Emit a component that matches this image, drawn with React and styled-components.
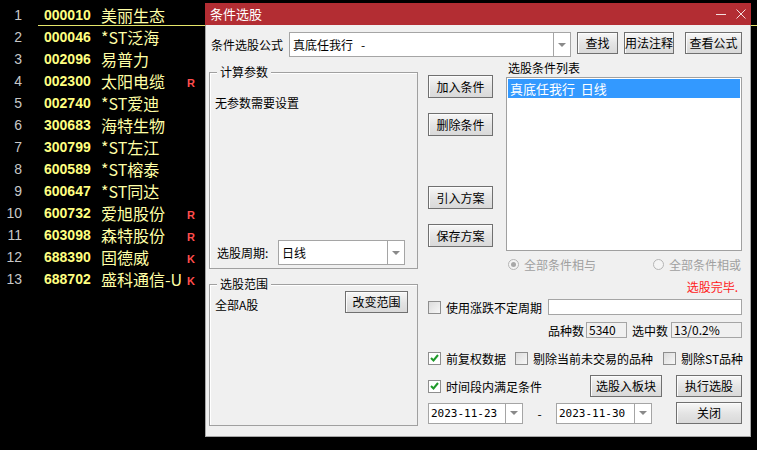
import React from "react";
import styled, { createGlobalStyle } from "styled-components";

const GlobalStyle = createGlobalStyle`
  html, body {
    margin: 0;
    padding: 0;
    background: #000;
  }
  body {
    width: 757px;
    height: 450px;
    overflow: hidden;
    font-family: "Noto Sans CJK SC", "Microsoft YaHei", sans-serif;
  }
  * {
    box-sizing: border-box;
  }
`;

const Screen = styled.div`
  position: relative;
  width: 757px;
  height: 450px;
  background: #000;
  overflow: hidden;
`;

/* ---------- stock list behind the dialog ---------- */

const StockList = styled.div`
  display: flex;
  flex-direction: column;
  padding-top: 4px;
`;

const StockRow = styled.div`
  display: flex;
  height: 22px;
`;

const RowNo = styled.div`
  width: 38px;
  padding-right: 16px;
  text-align: right;
  color: #c8c8c8;
  font: 14px/22px "Liberation Sans", Arial, sans-serif;
`;

const RowBody = styled.div`
  flex: 1;
  display: flex;
  align-items: center;
  border-bottom: 1px solid ${(p) => (p.$active ? "#e6e66a" : "transparent")};
`;

const Code = styled.span`
  width: 63px;
  padding-left: 6px;
  color: #ffff80;
  font: bold 14px "Liberation Sans", Arial, sans-serif;
`;

const Name = styled.span`
  width: 86px;
  color: #ffffa6;
  font: 16px "Noto Sans CJK SC", sans-serif;
  white-space: nowrap;
`;

const Flag = styled.span`
  margin-top: 4px;
  color: #ff4d4d;
  font: bold 11px "Liberation Sans", Arial, sans-serif;
`;

/* ---------- dialog window ---------- */

const Dialog = styled.div`
  position: absolute;
  left: 205px;
  top: 3px;
  width: 546px;
  height: 434px;
  display: flex;
  flex-direction: column;
  font-size: 12px;
  color: #000;
`;

const TitleBar = styled.div`
  height: 22px;
  display: flex;
  align-items: center;
  justify-content: space-between;
  background: #b32d33;
  padding: 0 5px 0 5px;
`;

const Title = styled.span`
  color: #fff;
  font-size: 13px;
  line-height: 22px;
`;

const WinControls = styled.div`
  display: flex;
  align-items: center;
  gap: 10px;
`;

const Body = styled.div`
  flex: 1;
  background: #f0f0f0;
  border: 1px solid #a6a6a6;
  border-top: none;
  padding: 7px 8px 0 3px;
`;

const FormulaRow = styled.div`
  display: flex;
  align-items: flex-start;
  height: 25px;
`;

const FormulaLabel = styled.span`
  width: 79px;
  margin-left: 2px;
  line-height: 25px;
`;

const Button = styled.button`
  width: ${(p) => p.$w}px;
  height: ${(p) => p.$h || 22}px;
  margin: ${(p) => p.$mt || 0}px 0 0 ${(p) => p.$ml || 0}px;
  padding: 0;
  flex-shrink: 0;
  border: 1px solid #707070;
  background: linear-gradient(#f7f7f7 0%, #ececec 30%, #e3e3e3 55%, #d9d9d9 100%);
  box-shadow: inset 1px 1px 0 #fcfcfc;
  font: 12px "Noto Sans CJK SC", sans-serif;
  color: #000;
  line-height: 1;
`;

const ComboBox = styled.div`
  display: flex;
  width: ${(p) => p.$w}px;
  height: ${(p) => p.$h}px;
  flex-shrink: 0;
  background: #fff;
  border: 1px solid #a5a5a5;
`;

const ComboText = styled.span`
  flex: 1;
  padding-left: ${(p) => (p.$mono ? 2 : 3)}px;
  display: flex;
  align-items: center;
  white-space: pre;
  font: ${(p) =>
    p.$mono
      ? `11px "DejaVu Sans Mono", "Liberation Mono", monospace`
      : `12px "Noto Sans CJK SC", sans-serif`};
`;

const ComboArrow = styled.span`
  width: 17px;
  border-left: 1px solid #a5a5a5;
  display: flex;
  align-items: center;
  justify-content: center;

  &::before {
    content: "";
    border-left: 4px solid transparent;
    border-right: 4px solid transparent;
    border-top: 4px solid #8a8a8a;
  }
`;

const Main = styled.div`
  display: flex;
  margin-top: 4px;
`;

const LeftCol = styled.div`
  width: 209px;
  padding-top: 11px;
  display: flex;
  flex-direction: column;
`;

const Group = styled.div`
  position: relative;
  height: ${(p) => p.$h}px;
  margin-top: ${(p) => p.$mt || 0}px;
  border: 1px solid #a0a0a0;
  box-shadow: inset 1px 1px 0 #fff;
  display: flex;
  flex-direction: ${(p) => (p.$row ? "row" : "column")};
  justify-content: space-between;
  align-items: ${(p) => (p.$row ? "flex-start" : "stretch")};
  padding: ${(p) => p.$pad};
`;

const GroupTitle = styled.span`
  position: absolute;
  top: -9px;
  left: 7px;
  padding: 0 3px;
  background: #f0f0f0;
  line-height: 16px;
`;

const PlainText = styled.span`
  line-height: 16px;
  margin-top: ${(p) => p.$mt || 0}px;
`;

const PeriodRow = styled.div`
  display: flex;
  align-items: center;
`;

const PeriodLabel = styled.span`
  width: 61px;
  margin-left: 2px;
`;

const RightCol = styled.div`
  width: 314px;
  margin-left: 10px;
  display: flex;
  flex-direction: column;
`;

const TopSection = styled.div`
  display: flex;
  height: 210px;
`;

const ButtonCol = styled.div`
  width: 65px;
  display: flex;
  flex-direction: column;
`;

const ListCol = styled.div`
  width: 236px;
  margin-left: 13px;
  display: flex;
  flex-direction: column;
`;

const ListLabel = styled.span`
  line-height: 14px;
  padding-left: 2px;
`;

const ListBox = styled.div`
  margin-top: 2px;
  height: 174px;
  background: #fff;
  border: 1px solid #a0a0a0;
  padding: 1px;
`;

const ListItem = styled.div`
  height: 19px;
  line-height: 19px;
  padding-left: 2px;
  white-space: pre;
  font-size: 13px;
  background: ${(p) => (p.$selected ? "#3399ff" : "transparent")};
  color: ${(p) => (p.$selected ? "#fff" : "#000")};
`;

const RadioRow = styled.div`
  margin-top: 6px;
  height: 14px;
  display: flex;
  justify-content: space-between;
  padding: 0 1px 0 2px;
`;

const RadioItem = styled.label`
  display: flex;
  align-items: center;
  gap: 5px;
  color: #a0a0a0;
`;

const RadioDot = styled.span`
  width: 11px;
  height: 11px;
  border-radius: 50%;
  border: 1px solid #b5b5b5;
  background: #f4f4f4;
  display: flex;
  align-items: center;
  justify-content: center;

  &::after {
    content: "";
    width: 5px;
    height: 5px;
    border-radius: 50%;
    background: ${(p) => (p.$on ? "#a8a8a8" : "transparent")};
  }
`;

const StatusText = styled.div`
  margin-top: 9px;
  line-height: 14px;
  text-align: right;
  padding-right: 4px;
  color: #ff1a1a;
`;

const Line = styled.div`
  display: flex;
  align-items: center;
  height: ${(p) => p.$h}px;
  margin-top: ${(p) => p.$mt}px;
  padding-left: ${(p) => p.$pl || 0}px;
`;

const CheckItem = styled.label`
  display: flex;
  align-items: center;
  gap: 5px;
  margin-left: ${(p) => p.$ml || 0}px;
  white-space: nowrap;
`;

const Box = styled.span`
  width: 13px;
  height: 13px;
  flex-shrink: 0;
  border: 1px solid #8e8e8e;
  background: ${(p) =>
    p.$checked ? "#fff" : "linear-gradient(135deg, #dcdcdc, #f7f7f7)"};
  display: flex;
  align-items: center;
  justify-content: center;
`;

const TextField = styled.div`
  margin-left: auto;
  width: ${(p) => p.$w}px;
  height: 16px;
  background: #fff;
  border: 1px solid #a5a5a5;
`;

const ReadBox = styled.span`
  width: ${(p) => p.$w}px;
  height: 16px;
  margin-left: ${(p) => p.$ml}px;
  border: 1px solid #a5a5a5;
  background: #f0f0f0;
  padding-left: 2px;
  line-height: 14px;
`;

const CountLabel = styled.span`
  margin-left: ${(p) => p.$ml || 0}px;
`;

const Dash = styled.span`
  width: 33px;
  text-align: center;
`;

const Spacer = styled.span`
  margin-left: auto;
`;

const stocks = [
  ["1", "000010", "美丽生态", ""],
  ["2", "000046", "*ST泛海", ""],
  ["3", "002096", "易普力", ""],
  ["4", "002300", "太阳电缆", "R"],
  ["5", "002740", "*ST爱迪", ""],
  ["6", "300683", "海特生物", ""],
  ["7", "300799", "*ST左江", ""],
  ["8", "600589", "*ST榕泰", ""],
  ["9", "600647", "*ST同达", ""],
  ["10", "600732", "爱旭股份", "R"],
  ["11", "603098", "森特股份", "R"],
  ["12", "688390", "固德威", "K"],
  ["13", "688702", "盛科通信-U", "K"],
];

const Check = ({ checked }) => (
  <Box $checked={checked}>
    {checked && (
      <svg width="9" height="8" viewBox="0 0 9 8">
        <path d="M1 4 L3.5 6.5 L8 1" fill="none" stroke="#1f9a2a" strokeWidth="2" />
      </svg>
    )}
  </Box>
);

const Combo = ({ w, h, text, mono }) => (
  <ComboBox $w={w} $h={h}>
    <ComboText $mono={mono}>{text}</ComboText>
    <ComboArrow />
  </ComboBox>
);

const App = () => {
  return (
    <Screen>
      <GlobalStyle />
      <StockList>
        {stocks.map(([no, code, name, flag], i) => (
          <StockRow key={code}>
            <RowNo>{no}</RowNo>
            <RowBody $active={i === 0}>
              <Code>{code}</Code>
              <Name>{name}</Name>
              {flag && <Flag>{flag}</Flag>}
            </RowBody>
          </StockRow>
        ))}
      </StockList>

      <Dialog>
        <TitleBar>
          <Title>条件选股</Title>
          <WinControls>
            <svg width="10" height="10" viewBox="0 0 10 10">
              <path d="M0 5.5 H10" stroke="#f3dede" strokeWidth="1" />
            </svg>
            <svg width="10" height="10" viewBox="0 0 10 10">
              <path d="M0.5 0.5 L9.5 9.5 M9.5 0.5 L0.5 9.5" stroke="#f3dede" strokeWidth="1" />
            </svg>
          </WinControls>
        </TitleBar>
        <Body>
          <FormulaRow>
            <FormulaLabel>条件选股公式</FormulaLabel>
            <Combo w={282} h={25} text={"真底任我行   -"} />
            <Button $w={41} $ml={6}>查找</Button>
            <Button $w={50} $ml={6}>用法注释</Button>
            <Button $w={57} $ml={11}>查看公式</Button>
          </FormulaRow>

          <Main>
            <LeftCol>
              <Group $h={197} $pad="22px 11px 3px 5px">
                <GroupTitle>计算参数</GroupTitle>
                <PlainText>无参数需要设置</PlainText>
                <PeriodRow>
                  <PeriodLabel>选股周期:</PeriodLabel>
                  <Combo w={127} h={25} text="日线" />
                </PeriodRow>
              </Group>
              <Group $h={142} $mt={15} $row $pad="6px 9px 0 5px">
                <GroupTitle>选股范围</GroupTitle>
                <PlainText $mt={6}>全部A股</PlainText>
                <Button $w={63}>改变范围</Button>
              </Group>
            </LeftCol>

            <RightCol>
              <TopSection>
                <ButtonCol>
                  <Button $w={65} $h={23} $mt={14}>加入条件</Button>
                  <Button $w={65} $h={23} $mt={15}>删除条件</Button>
                  <Button $w={65} $h={23} $mt={50}>引入方案</Button>
                  <Button $w={65} $h={23} $mt={15}>保存方案</Button>
                </ButtonCol>
                <ListCol>
                  <ListLabel>选股条件列表</ListLabel>
                  <ListBox>
                    <ListItem $selected>{"真底任我行  日线"}</ListItem>
                  </ListBox>
                  <RadioRow>
                    <RadioItem>
                      <RadioDot $on />
                      全部条件相与
                    </RadioItem>
                    <RadioItem>
                      <RadioDot />
                      全部条件相或
                    </RadioItem>
                  </RadioRow>
                </ListCol>
              </TopSection>

              <StatusText>选股完毕.</StatusText>

              <Line $h={16} $mt={5}>
                <CheckItem>
                  <Check />
                  使用涨跌不定周期
                </CheckItem>
                <TextField $w={194} />
              </Line>

              <Line $h={16} $mt={7} $pl={120}>
                <CountLabel>品种数</CountLabel>
                <ReadBox $w={41} $ml={2}>5340</ReadBox>
                <CountLabel $ml={5}>选中数</CountLabel>
                <ReadBox $w={71} $ml={3}>13/0.2%</ReadBox>
              </Line>

              <Line $h={14} $mt={13}>
                <CheckItem>
                  <Check checked />
                  前复权数据
                </CheckItem>
                <CheckItem $ml={9}>
                  <Check />
                  剔除当前未交易的品种
                </CheckItem>
                <CheckItem $ml={10}>
                  <Check />
                  剔除ST品种
                </CheckItem>
              </Line>

              <Line $h={22} $mt={10}>
                <CheckItem>
                  <Check checked />
                  时间段内满足条件
                </CheckItem>
                <Spacer />
                <Button $w={72}>选股入板块</Button>
                <Button $w={66} $ml={14}>执行选股</Button>
              </Line>

              <Line $h={22} $mt={5}>
                <Combo w={95} h={21} text="2023-11-23" mono />
                <Dash>-</Dash>
                <Combo w={96} h={21} text="2023-11-30" mono />
                <Spacer />
                <Button $w={66}>关闭</Button>
              </Line>
            </RightCol>
          </Main>
        </Body>
      </Dialog>
    </Screen>
  );
};

export default App;
